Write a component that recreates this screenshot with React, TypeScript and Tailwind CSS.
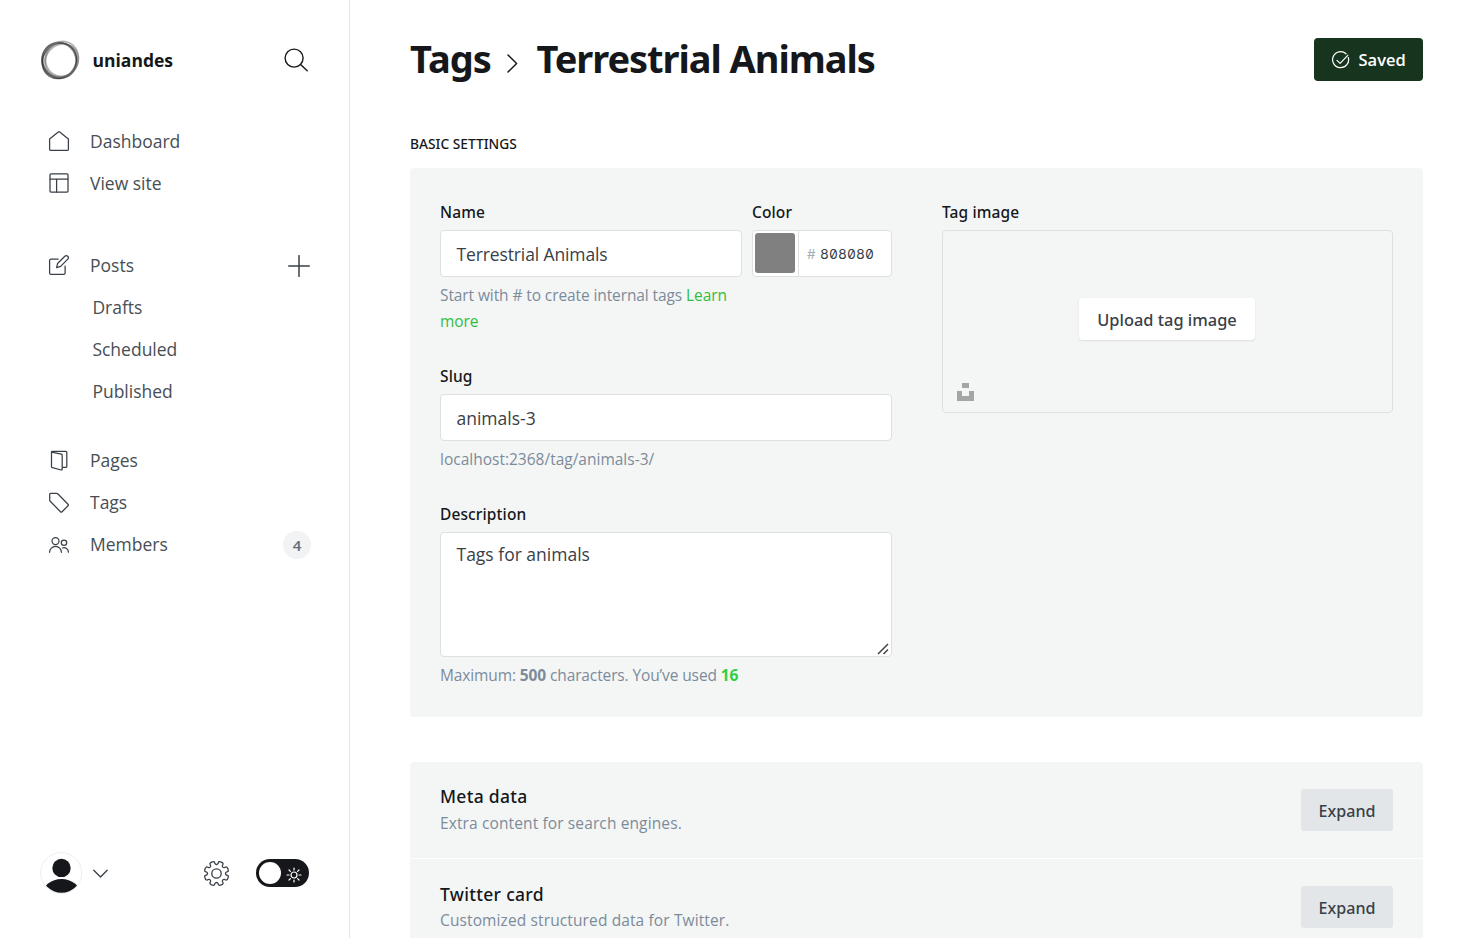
import React from "react";

const point = (r: number, deg: number): [number, number] => {
  const a = (deg * Math.PI) / 180;
  return [13 + r * Math.cos(a), 13 + r * Math.sin(a)];
};

const gearPath = (() => {
  const pts: [number, number][] = [];
  for (let i = 0; i < 8; i++) {
    const c = 22.5 + i * 45;
    pts.push(point(9.4, c - 19), point(10.4, c - 13), point(13.1, c - 12), point(13.1, c + 12), point(10.4, c + 13), point(9.4, c + 19));
  }
  const mid = (a: [number, number], b: [number, number]) =>
    `${((a[0] + b[0]) / 2).toFixed(2)} ${((a[1] + b[1]) / 2).toFixed(2)}`;
  let d = `M${mid(pts[pts.length - 1], pts[0])}`;
  pts.forEach((p, i) => {
    d += `Q${p[0].toFixed(2)} ${p[1].toFixed(2)} ${mid(p, pts[(i + 1) % pts.length])}`;
  });
  return d + "Z";
})();

type IconProps = { children: React.ReactNode };

function NavIcon({ children }: IconProps) {
  return (
    <svg className="-mt-px h-5 w-5 shrink-0 overflow-visible" viewBox="0 0 20 20" fill="none" stroke="#394047" strokeWidth="1.25" strokeLinecap="round" strokeLinejoin="round">
      {children}
    </svg>
  );
}

const HomeIcon = () => (
  <NavIcon>
    <path d="M.6 8.1 9.3.9a1.1 1.1 0 0 1 1.4 0l8.7 7.2v10.5a.8.8 0 0 1-.8.8H1.4a.8.8 0 0 1-.8-.8V8.1Z" />
  </NavIcon>
);
const SiteIcon = () => (
  <NavIcon>
    <rect x="1" y=".9" width="18" height="18.2" rx="1" />
    <path d="M1 6.1h18M7.6 6.1v13" />
  </NavIcon>
);
const PostsIcon = () => (
  <NavIcon>
    <path d="M9.2 4H2a1.4 1.4 0 0 0-1.4 1.4V18A1.4 1.4 0 0 0 2 19.4h12.7a1.4 1.4 0 0 0 1.4-1.4v-7" />
    <path d="m11.6 11.4-4 1.2 1-4.1 7.2-7.2a1.9 1.9 0 0 1 3 0 1.9 1.9 0 0 1 0 2.8l-7.2 7.3Z" />
  </NavIcon>
);
const PagesIcon = () => (
  <NavIcon>
    <path transform="translate(0 .8)" d="M2.6 1.3 12.4 3.4a1 1 0 0 1 .8 1v14a.8.8 0 0 1-1 .8l-8.9-2.3a1 1 0 0 1-.8-1V1.3c0-.4.3-.7.7-.7h13.7c.5 0 .9.4.9.9v14.1c0 .5-.4.9-.9.9h-3.7" />
  </NavIcon>
);
const TagIcon = () => (
  <NavIcon>
    <path transform="translate(0 .8)" d="M.7 1.7V7.2c0 .5.2 1 .5 1.3l10.3 10.4c.5.5 1.1.5 1.6 0l5.900-5.900c.5-.5.5-1.100 0-1.600L9 1.200A1.900 1.900 0 0 0 7.700.6H1.700a1 1 0 0 0-1 1.100Z" />
  </NavIcon>
);
const MembersIcon = () => (
  <NavIcon>
    <g transform="translate(0 .8)">
      <circle cx="6.5" cy="6.3" r="3.5" />
      <path d="M.6 17.500a5.900 5.900 0 0 1 11.800 0" />
      <circle cx="15" cy="8" r="2.7" />
      <path d="M13.500 13.200a4.400 4.400 0 0 1 5.900 4.200" />
    </g>
  </NavIcon>
);

function NavItem({ icon, label, children }: { icon: React.ReactNode; label: string; children?: React.ReactNode }) {
  return (
    <a className="flex h-[42px] items-center pr-[38px] pl-[49px]">
      {icon}
      <span className="ml-[21px] flex-1 text-[17.5px] text-[#474e55]">{label}</span>
      {children}
    </a>
  );
}

function SubItem({ label }: { label: string }) {
  return <a className="flex h-[42px] items-center pl-[92.4px] text-[17.5px] text-[#474e55]">{label}</a>;
}

function Sidebar() {
  return (
    <nav className="flex h-full w-[350px] shrink-0 flex-col border-r border-[#e3e5e8] bg-white antialiased">
      <div className="flex h-[120px] items-center pr-[41px] pl-[40px]">
        <svg className="h-10 w-10" viewBox="0 0 40 40">
          <g fillRule="evenodd">
            <path fill="#222" fillOpacity=".5" d="M1 20.500a18.300 18.300 0 1 1 36.600 0a18.300 18.300 0 1 1-36.600 0ZM3.500 20.200a16.400 16.400 0 1 0 32.800 0a16.400 16.400 0 1 0-32.800 0Z" />
          </g>
          <g fill="none">
            <ellipse cx="19.4" cy="20.8" rx="18.5" ry="16.2" stroke="#222" strokeOpacity=".6" strokeWidth="1.4" transform="rotate(-55 19.4 20.8)" />
            <ellipse cx="19.2" cy="20.4" rx="18.2" ry="16.8" stroke="#222" strokeOpacity=".5" strokeWidth="1.6" transform="rotate(65 19.2 20.4)" />
            <ellipse cx="22" cy="18.8" rx="16.3" ry="17.6" stroke="#777" strokeOpacity=".55" strokeWidth="1.7" transform="rotate(20 22 18.8)" />
            <ellipse cx="21.5" cy="20.6" rx="17.4" ry="15.8" stroke="#666" strokeOpacity=".5" strokeWidth="2" transform="rotate(-48 21.5 20.6)" />
          </g>
        </svg>
        <span className="ml-[12.5px] flex-1 text-[17.5px] font-bold text-[#15171a]">uniandes</span>
        <svg className="h-6 w-6" viewBox="0 0 24 24" fill="none" stroke="#15171a" strokeWidth="1.4" strokeLinecap="round">
          <circle cx="10.1" cy="10.1" r="9" />
          <path d="m16.6 16.6 6.6 6.2" />
        </svg>
      </div>
      <div className="mt-[0.5px] flex flex-col">
        <NavItem icon={<HomeIcon />} label="Dashboard" />
        <NavItem icon={<SiteIcon />} label="View site" />
      </div>
      <div className="mt-[40px] flex flex-col">
        <NavItem icon={<PostsIcon />} label="Posts">
          <svg className="mr-px h-[22px] w-[22px]" viewBox="0 0 22 22" stroke="#394047" strokeWidth="1.5" strokeLinecap="round">
            <path d="M11 .7v20.6M.7 11h20.6" />
          </svg>
        </NavItem>
        <SubItem label="Drafts" />
        <SubItem label="Scheduled" />
        <SubItem label="Published" />
      </div>
      <div className="mt-[27px] flex flex-1 flex-col">
        <NavItem icon={<PagesIcon />} label="Pages" />
        <NavItem icon={<TagIcon />} label="Tags" />
        <NavItem icon={<MembersIcon />} label="Members">
          <span className="flex h-7 w-7 items-center justify-center rounded-full bg-[#f1f3f4] pt-px text-[15px] font-semibold text-[#626d79]">4</span>
        </NavItem>
      </div>
      <div className="flex h-[130px] items-center pr-[40px] pl-[40px]">
        <svg className="h-[42px] w-[42px]" viewBox="0 0 42 42">
          <defs>
            <clipPath id="avatar">
              <circle cx="21.5" cy="20.5" r="20.3" />
            </clipPath>
          </defs>
          <circle cx="21.2" cy="21" r="20.5" fill="#fff" stroke="#eceeef" />
          <circle cx="21.5" cy="15.9" r="9.2" fill="#15171a" />
          <ellipse cx="21.5" cy="42" rx="19" ry="15" fill="#15171a" clipPath="url(#avatar)" />
        </svg>
        <svg className="ml-[11px] h-[9px] w-[15px]" viewBox="0 0 15 9" fill="none" stroke="#394047" strokeWidth="1.3" strokeLinecap="round" strokeLinejoin="round">
          <path d="M.8 1.2 7.5 8l6.7-6.8" />
        </svg>
        <svg className="mt-px ml-auto h-[25px] w-[25px] overflow-visible" viewBox="0 0 26 26" fill="none" stroke="#394047" strokeWidth="1.35" strokeLinejoin="round">
          <path d={gearPath} />
          <circle cx="13" cy="13" r="4.9" />
        </svg>
        <div className="ml-[27px] flex h-7 w-[53px] items-center justify-between rounded-full bg-[#15171a] pr-[7.5px] pl-[3px]">
          <span className="h-[22px] w-[22px] rounded-full bg-white" />
          <svg className="mt-[3px] h-4 w-4" viewBox="0 0 16 16" fill="none" stroke="#fff" strokeWidth="1.2" strokeLinecap="round">
            <circle cx="8" cy="8" r="3" />
            <path d="M8 1v2M8 13v2M1 8h2M13 8h2M3 3l1.400 1.400M11.600 11.600 13 13M3 13l1.400-1.400M11.600 4.400 13 3" />
          </svg>
        </div>
      </div>
    </nav>
  );
}

function Label({ children }: { children: React.ReactNode }) {
  return <label className="block h-[32px] shrink-0 font-['Noto_Sans',sans-serif] text-[15.5px] leading-[29px] font-medium tracking-[0.12px] text-[#15171a]">{children}</label>;
}

function SettingsRow({ title, text, first }: { title: string; text: string; first?: boolean }) {
  return (
    <div className={first ? "flex h-[96px] justify-between px-[30px] pt-[27px]" : "flex h-[98px] justify-between border-t border-white px-[30px] pt-[27px]"}>
      <div className={first ? "-mt-[7px]" : "-mt-[6px]"}>
        <h4 className="font-['Noto_Sans',sans-serif] text-[17.5px] leading-[28px] font-medium tracking-[0.3px] text-[#15171a]">{title}</h4>
        <p className={first ? "text-[15.5px] leading-[26px] tracking-[0.12px] text-[#7c8b9a]" : "-mt-px text-[15.5px] leading-[26px] tracking-[0.12px] text-[#7c8b9a]"}>{text}</p>
      </div>
      <button className="h-[42px] w-[92px] rounded-[3px] bg-[#e3e6e9] pt-[2px] font-['Noto_Sans',sans-serif] text-[16.1px] font-medium text-[#394047]">Expand</button>
    </div>
  );
}

export default function App() {
  return (
    <div className="flex h-[938px] w-full overflow-hidden bg-white font-['Open_Sans',sans-serif]">
      <Sidebar />
      <main className="flex min-w-0 flex-1 flex-col pr-[60px] pl-[60px]">
        <header className="flex h-[119px] shrink-0 items-center justify-between">
          <h1 className="-mt-[2px] flex items-center font-['Noto_Sans',sans-serif] text-[38px] font-bold tracking-[-0.95px] text-[#15171a]">
            <span>Tags</span>
            <svg className="mt-[10px] mr-[18px] ml-[16.5px] h-[19px] w-[11px]" viewBox="0 0 11 19" fill="none" stroke="#15171a" strokeWidth="1.5" strokeLinecap="round" strokeLinejoin="round">
              <path d="m1 1 8.6 8.5L1 18" />
            </svg>
            <span className="tracking-[-1.05px]">Terrestrial Animals</span>
          </h1>
          <button className="flex h-[43px] w-[109px] items-center rounded-[4px] bg-[#17341f] pl-[18px] text-[16.5px] font-semibold text-white">
            <svg className="mr-[8.5px] h-[18px] w-[18px]" viewBox="0 0 18 18" fill="none" stroke="#fff" strokeWidth="1.2" strokeLinecap="round" strokeLinejoin="round">
              <path d="M16.3 6.500A8 8 0 1 1 14 2.800" />
              <path d="m5 9.300 3.100 3.100L15.800 4.300" />
            </svg>
            <span className="pt-[2px]">Saved</span>
          </button>
        </header>
        <h4 className="mt-[15px] h-[34px] shrink-0 font-['Noto_Sans',sans-serif] text-[13.75px] leading-[20px] font-medium text-[#15171a]">BASIC SETTINGS</h4>
        <section className="flex h-[549px] shrink-0 gap-[50px] rounded-[4px] bg-[#f4f6f6] p-[30px]">
          <div className="flex w-[452px] flex-col">
            <div className="flex h-[164px] shrink-0 gap-[10px]">
              <div className="w-[302px]">
                <Label>Name</Label>
                <div className="flex h-[47px] items-center rounded-[4px] border border-[#dddfe0] bg-white px-[15.5px] pt-[2px] text-[17.5px] tracking-[-0.12px] text-[#394047]">Terrestrial Animals</div>
                <p className="mt-[5px] text-[15.5px] leading-[26px] tracking-[-0.1px] text-[#7c8b9a]">
                  Start with # to create internal tags <a className="text-[#30bd42]">Learn more</a>
                </p>
              </div>
              <div className="w-[140px]">
                <Label>Color</Label>
                <div className="flex h-[47px] items-center rounded-[4px] border border-[#dddfe0] bg-white">
                  <div className="flex h-full w-[46px] items-start border-r border-[#dddfe0] pt-[2px] pl-[2px]">
                    <span className="h-10 w-10 rounded-[3px] bg-[#808080]" />
                  </div>
                  <span className="ml-[8px] w-[13px] pt-px font-['Inter',sans-serif] text-[13.5px] text-[#a5aeb7]">#</span>
                  <span className="pt-px font-['Inter',sans-serif] text-[13.75px] tracking-[0.1px] text-[#394047] tabular-nums slashed-zero">808080</span>
                </div>
              </div>
            </div>
            <div className="h-[138px] shrink-0">
              <Label>Slug</Label>
              <div className="flex h-[47px] items-center rounded-[4px] border border-[#dddfe0] bg-white px-[15.5px] pt-[2px] text-[17.5px] text-[#394047]">animals-3</div>
              <p className="mt-[5px] text-[15.5px] leading-[26px] text-[#7c8b9a]">localhost:2368/tag/animals-3/</p>
            </div>
            <div className="shrink-0">
              <Label>Description</Label>
              <div className="relative h-[125px] rounded-[4px] border border-[#dddfe0] bg-white px-[15.5px] py-[8px] text-[17.5px] leading-[27px] text-[#394047]">
                Tags for animals
                <svg className="absolute right-[2px] bottom-[1px] h-[12px] w-[12px]" viewBox="0 0 12 12" stroke="#444" strokeWidth="1.5">
                  <path d="M1 11 11 1M6.500 11 11 6.500" />
                </svg>
              </div>
              <p className="mt-[5px] text-[15.5px] leading-[26px] tracking-[-0.12px] text-[#7c8b9a]">
                Maximum: <b className="font-bold">500</b> characters. You’ve used <b className="font-bold text-[#30cf43]">16</b>
              </p>
            </div>
          </div>
          <div className="flex-1">
            <Label>Tag image</Label>
            <div className="relative flex h-[183px] items-center justify-center rounded-[4px] border border-[#dddfe0]">
              <button className="mr-px mb-[5px] h-[42px] w-[176px] rounded-[4px] bg-white pt-[2px] font-['Noto_Sans',sans-serif] text-[16.4px] font-medium text-[#394047] shadow-[0_1px_2px_rgba(0,0,0,0.1)]">Upload tag image</button>
              <svg className="absolute bottom-[11px] left-[14px] h-[18px] w-[17px]" viewBox="0 0 17 18" fill="#a4a6a6" shapeRendering="crispEdges">
                <path d="M5 0h7v5H5zM0 8h5v5h7V8h5v10H0z" />
              </svg>
            </div>
          </div>
        </section>
        <section className="mt-[45px] h-[195px] shrink-0 rounded-t-[4px] bg-[#f4f6f6]">
          <SettingsRow first title="Meta data" text="Extra content for search engines." />
          <SettingsRow title="Twitter card" text="Customized structured data for Twitter." />
        </section>
      </main>
    </div>
  );
}
